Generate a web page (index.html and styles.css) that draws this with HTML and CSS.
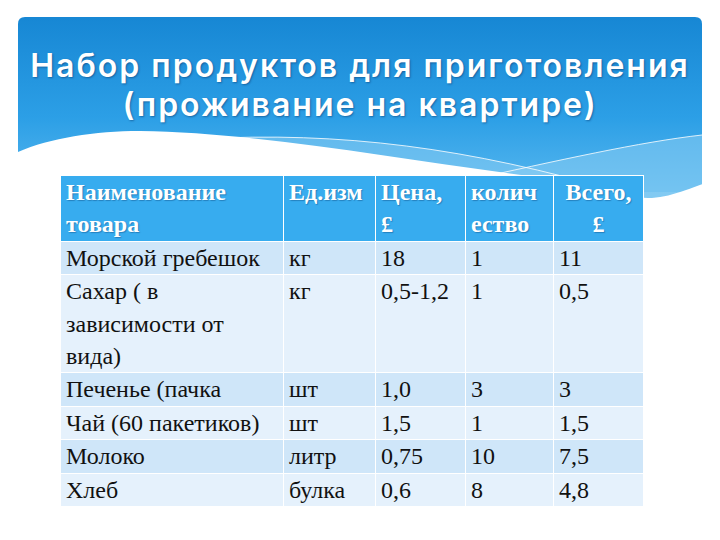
FILE: index.html
```html
<!DOCTYPE html>
<html lang="ru">
<head>
<meta charset="utf-8">
<link rel="stylesheet" href="styles.css">
</head>
<body>
<div class="slide">
  <svg class="backdrop" width="720" height="540" viewBox="0 0 720 540" aria-hidden="true">
    <defs>
      <linearGradient id="sky" x1="0" y1="0" x2="0" y2="1">
        <stop offset="0" stop-color="#1787d4"/>
        <stop offset="0.55" stop-color="#2c9fe6"/>
        <stop offset="1" stop-color="#5cbaf0"/>
      </linearGradient>
    </defs>
    <path d="M18,24 Q18,17 25,17 H695 Q702,17 702,24 V200 H18 Z" fill="url(#sky)"/>
    <path d="M200,139 C340,131 470,148 620,192 L702,192 L702,200 L200,200 Z" fill="#8fd0f4" opacity="0.5"/>
    <path d="M460,182 C560,160 640,142 702,135 L702,200 L460,200 Z" fill="#8fd0f4" opacity="0.5"/>
    <path d="M200,139 C340,131 470,148 620,192" fill="none" stroke="#ffffff" stroke-opacity="0.8" stroke-width="1"/>
    <path d="M460,182 C560,160 640,142 702,135" fill="none" stroke="#ffffff" stroke-opacity="0.8" stroke-width="1"/>
    <path d="M0,160 L18,152 C50,138 95,131 140,131 C260,132 420,163 560,180 C600,186 625,198 648,198 C670,198 690,188 720,178 L720,540 L0,540 Z" fill="#ffffff"/>
  </svg>

  <h1 class="title"><span class="line">Набор продуктов для приготовления</span><span class="line">(проживание на квартире)</span></h1>

  <table class="goods">
    <colgroup>
      <col class="c-name"><col class="c-unit"><col class="c-price"><col class="c-qty"><col class="c-total">
    </colgroup>
    <thead>
      <tr>
        <th>Наименование товара</th>
        <th>Ед.изм</th>
        <th>Цена,<br>£</th>
        <th>колич<wbr>ество</th>
        <th class="center">Всего,<br>£</th>
      </tr>
    </thead>
    <tbody>
      <tr class="odd"><td>Морской гребешок</td><td>кг</td><td>18</td><td>1</td><td>11</td></tr>
      <tr class="even"><td>Сахар ( в зависимости от вида)</td><td>кг</td><td>0,5-1,2</td><td>1</td><td>0,5</td></tr>
      <tr class="odd"><td>Печенье (пачка</td><td>шт</td><td>1,0</td><td>3</td><td>3</td></tr>
      <tr class="even"><td>Чай (60 пакетиков)</td><td>шт</td><td>1,5</td><td>1</td><td>1,5</td></tr>
      <tr class="odd"><td>Молоко</td><td>литр</td><td>0,75</td><td>10</td><td>7,5</td></tr>
      <tr class="even"><td>Хлеб</td><td>булка</td><td>0,6</td><td>8</td><td>4,8</td></tr>
    </tbody>
  </table>
</div>
</body>
</html>
```

FILE: styles.css
```css
html, body {
  margin: 0;
  padding: 0;
  background: #ffffff;
}

.slide {
  position: relative;
  width: 720px;
  height: 540px;
  overflow: hidden;
  background: #ffffff;
}

.backdrop {
  position: absolute;
  left: 0;
  top: 0;
  z-index: 0;
}

.title {
  position: relative;
  z-index: 1;
  margin: 0;
  padding-top: 46px;
  text-align: center;
  font-family: Inter, "Open Sans", sans-serif;
  font-weight: 600;
  font-size: 32px;
  line-height: 39px;
  letter-spacing: 2px;
  color: #ffffff;
  text-shadow: 1px 1px 2px rgba(0, 40, 90, 0.45);
}

.title .line {
  display: block;
  height: 39px;
}

.goods {
  position: relative;
  z-index: 1;
  margin: 51px 0 0 60px;
  width: 583px;
  table-layout: fixed;
  border-collapse: collapse;
  font-family: "Times New Roman", Times, "Liberation Serif", Tinos, "DejaVu Serif", serif;
  font-size: 24px;
  line-height: 32.4px;
  color: #111111;
}

.c-name { width: 223px; }
.c-unit { width: 92px; }
.c-price { width: 90px; }
.c-qty { width: 88px; }
.c-total { width: 90px; }

.goods th,
.goods td {
  padding: 0 5px;
  text-align: left;
  vertical-align: top;
  border: 1px solid #ffffff;
  font-family: inherit;
}

.goods th {
  background: #37acef;
  color: #ffffff;
  font-weight: bold;
  text-shadow: 1px 1px 1px rgba(0, 50, 100, 0.35);
}

.goods th.center {
  text-align: center;
}

.goods tr.odd td {
  background: #cfe6f9;
}

.goods tr.even td {
  background: #e5f1fc;
}
```
